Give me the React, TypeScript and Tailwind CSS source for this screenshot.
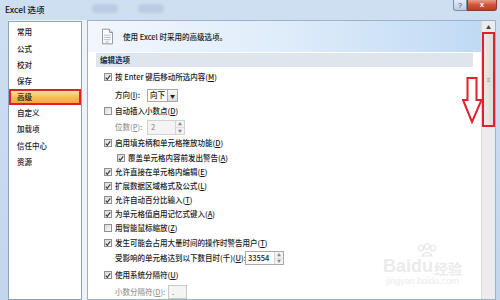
import React from "react";

const font = { fontFamily: '"Noto Sans CJK SC", "Microsoft YaHei", sans-serif' };
const latin = { fontFamily: '"Liberation Sans", Arial, sans-serif' };

function U({ k }: { k: string }) {
  return <span>(<span className="underline">{k}</span>)</span>;
}

function Check({ on = false }: { on?: boolean }) {
  return (
    <span className="w-[8px] h-[8px] flex-shrink-0 border border-[#8e8f8f] bg-gradient-to-br from-[#d8d8d8] to-[#fbfbfb] flex items-center justify-center">
      {on && (
        <svg width="7" height="7" viewBox="0 0 8 8">
          <path d="M1 4.2 L3 6.4 L7 1.2" fill="none" stroke="#333" strokeWidth="1.5" />
        </svg>
      )}
    </span>
  );
}

function Spin() {
  return (
    <span className="flex flex-col w-[9px] h-full border-l border-[#d4d4d4] bg-[#f3f3f3]">
      <span className="flex-1 flex items-center justify-center text-[4px] leading-none text-[#888]">▲</span>
      <span className="flex-1 flex items-center justify-center text-[4px] leading-none text-[#888] border-t border-[#dedede]">▼</span>
    </span>
  );
}

export default function App() {
  const nav = ["常用", "公式", "校对", "保存", "高级", "自定义", "加载项", "信任中心", "资源"];

  return (
    <div className="relative w-[500px] h-[300px] overflow-hidden bg-gradient-to-b from-[#cfdff2] to-[#c3d6ec] text-[7.5px] font-medium text-[#1a1a1a] leading-none whitespace-nowrap" style={font}>
      {/* Title bar */}
      <div className="h-[20px] flex items-start pl-[5px] pr-[3px]">
        <span className="mt-[5px] text-[8.5px] text-[#111]">Excel 选项</span>
        <div className="ml-[48px] mt-[4px] flex gap-[20px] opacity-30 blur-[1px]">
          <span className="w-[26px] h-[9px] bg-[#8ea6c4] rounded" />
          <span className="w-[26px] h-[9px] bg-[#8ea6c4] rounded" />
        </div>
        <div className="ml-auto flex">
          <div className="w-[14px] h-[11px] border border-[#7b8ea8] border-t-0 rounded-bl-[3px] bg-gradient-to-b from-[#e4ecf6] to-[#bccde2] flex items-center justify-center text-[7px] text-[#33475f]" style={latin}>?</div>
          <div className="w-[30px] h-[11px] border border-[#8c3a2c] border-t-0 rounded-br-[3px] bg-gradient-to-b from-[#e89c88] via-[#d0503a] to-[#c13b22] flex items-center justify-center text-[8px] font-bold text-white" style={latin}>x</div>
        </div>
      </div>

      {/* Body */}
      <div className="flex h-[280px] pl-[8px] pr-[4px]">
        <div className="flex flex-1 bg-[#eef2f7]">
          {/* Left nav */}
          <div className="mt-[1px] w-[74px] border border-[#8ea3bd] bg-white pt-[2px] flex flex-col">
            {nav.map((n) => (
              <div
                key={n}
                className={`h-[16.2px] flex items-center ${n === "高级" ? "pl-[6px] border-2 border-[#e0202a] bg-gradient-to-b from-[#fde29c] via-[#f9be5c] to-[#f5a838]" : "pl-[8px]"}`}
              >
                {n}
              </div>
            ))}
          </div>

          {/* Main panel */}
          <div className="ml-[5px] flex flex-1 border border-[#9db1c9] bg-white">
            <div className="flex-1 flex flex-col">
              <div className="h-[34px] flex items-center gap-[10px] pl-[14px] bg-gradient-to-r from-[#f2f7fd] via-[#dfecfa] to-[#c0daf4]">
                <svg width="11" height="17" viewBox="0 0 12 17">
                  <path d="M0.5 0.5 H8 L11.5 4 V16.5 H0.5 Z" fill="#fff" stroke="#8c8c8c" />
                  <path d="M8 0.5 V4 H11.5" fill="#eee" stroke="#8c8c8c" />
                  <path d="M3.5 7 H9.5 M3.5 9.5 H9.5 M3.5 12 H9.5 M3.5 14.5 H7.5" stroke="#8a9bb5" strokeWidth="0.8" />
                  <path d="M2 7 H2.8 M2 9.5 H2.8 M2 12 H2.8" stroke="#4b6b9a" strokeWidth="0.9" />
                </svg>
                <span className="text-[#1a1a1a]">使用 Excel 时采用的高级选项。</span>
              </div>
              <div className="mt-[1px] ml-[8px] mr-[8px] h-[16px] bg-[#dfe5ec] flex items-center pl-[4px] font-bold text-[#1f2f46]">编辑选项</div>

              <div className="pl-[16px] flex flex-col">
                <div className="mt-[3px] h-[14px] flex items-center gap-[3px]"><Check on /><span>按 Enter 键后移动所选内容<U k="M" /></span></div>
                <div className="mt-[4px] h-[14px] flex items-center pl-[11px]">
                  <span className="w-[32px]">方向<U k="I" />:</span>
                  <span className="h-[13px] w-[31px] border border-[#a9a9a9] flex items-center">
                    <span className="flex-1 pl-[2px]">向下</span>
                    <span className="w-[10px] h-full border-l border-[#a9a9a9] bg-gradient-to-b from-[#f6f6f6] to-[#dcdcdc] flex items-center justify-center text-[5px]">▼</span>
                  </span>
                </div>
                <div className="mt-[2px] h-[14px] flex items-center gap-[3px]"><Check /><span>自动插入小数点<U k="D" /></span></div>
                <div className="mt-[2px] h-[14px] flex items-center pl-[11px]">
                  <span className="w-[32px] text-[#999]">位数<U k="P" />:</span>
                  <span className="h-[15px] w-[38px] border border-[#d2d2d2] bg-[#f4f4f4] flex items-center">
                    <span className="flex-1 pl-[3px] text-[#9a9a9a]">2</span>
                    <Spin />
                  </span>
                </div>
                <div className="mt-[2px] h-[14px] flex items-center gap-[3px]"><Check on /><span>启用填充柄和单元格拖放功能<U k="D" /></span></div>
                <div className="mt-[1px] h-[14px] flex items-center gap-[3px] pl-[13px]"><Check on /><span>覆盖单元格内容前发出警告<U k="A" /></span></div>
                <div className="h-[14px] flex items-center gap-[3px]"><Check on /><span>允许直接在单元格内编辑<U k="E" /></span></div>
                <div className="h-[14px] flex items-center gap-[3px]"><Check on /><span>扩展数据区域格式及公式<U k="L" /></span></div>
                <div className="h-[14px] flex items-center gap-[3px]"><Check on /><span>允许自动百分比输入<U k="T" /></span></div>
                <div className="h-[14px] flex items-center gap-[3px]"><Check on /><span>为单元格值启用记忆式键入<U k="A" /></span></div>
                <div className="h-[14px] flex items-center gap-[3px]"><Check /><span>用智能鼠标缩放<U k="Z" /></span></div>
                <div className="mt-[1px] h-[14px] flex items-center gap-[3px]"><Check on /><span>发生可能会占用大量时间的操作时警告用户<U k="T" /></span></div>
                <div className="mt-[1px] h-[14px] flex items-center pl-[11px]">
                  <span className="w-[130px]">受影响的单元格达到以下数目时(千)<U k="U" />:</span>
                  <span className="h-[14px] w-[39px] border border-[#a9a9a9] flex items-center">
                    <span className="flex-1 pl-[2px]">33554</span>
                    <Spin />
                  </span>
                </div>
                <div className="mt-[3px] h-[14px] flex items-center gap-[3px]"><Check on /><span>使用系统分隔符<U k="U" /></span></div>
                <div className="mt-[3px] h-[14px] flex items-center pl-[11px]">
                  <span className="w-[53px] text-[#999]">小数分隔符<U k="D" />:</span>
                  <span className="h-[14px] w-[19px] border border-[#c9c9c9] bg-[#f4f4f4] text-[#999] pl-[3px] flex items-center">.</span>
                </div>
              </div>
            </div>

            {/* Scrollbar */}
            <div className="w-[14px] flex flex-col bg-[#ececec] border-l border-[#dadada]">
              <div className="h-[11px] flex items-center justify-center text-[5px] text-[#444]">▲</div>
              <div className="h-[95px] border-2 border-[#e0202a] bg-gradient-to-r from-[#ebebeb] to-[#dcdcdc] flex items-center justify-center">
                <span className="text-[6px] text-[#888]" style={latin}>≡</span>
              </div>
              <div className="flex-1" />
            </div>
          </div>
        </div>
      </div>

      {/* Red annotation arrow */}
      <svg className="absolute left-[462px] top-[77px]" width="21" height="47" viewBox="0 0 21 47">
        <path d="M5.5 1 H14.5 V23 H19.5 L10 45 L1 23 H5.5 Z" fill="#fff" stroke="#e0202a" strokeWidth="2" />
      </svg>

      {/* Watermark */}
      <div className="absolute left-[383px] top-[243px] flex flex-col items-center text-[#ebebeb] pointer-events-none">
        <svg width="24" height="14" viewBox="0 0 24 14" className="ml-[8px]">
          <g fill="none" stroke="#e6e6e6" strokeWidth="1.2">
            <ellipse cx="6" cy="5" rx="2.5" ry="3" />
            <ellipse cx="12" cy="3.5" rx="2.5" ry="3" />
            <ellipse cx="18" cy="5" rx="2.5" ry="3" />
            <path d="M7 13 Q12 6 17 13 Z" />
          </g>
        </svg>
        <div className="flex items-end">
          <span className="text-[18px] font-bold leading-none" style={latin}>Bai</span>
          <span className="text-[18px] font-bold leading-none" style={latin}>du</span>
          <span className="text-[14px] font-bold leading-none ml-[1px]">经验</span>
        </div>
        <span className="text-[9px] mt-[2px]" style={latin}>jingyan.baidu.com</span>
      </div>
    </div>
  );
}
